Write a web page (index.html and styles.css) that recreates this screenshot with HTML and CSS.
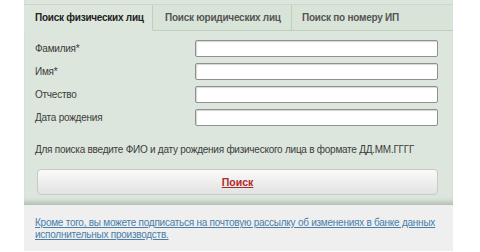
FILE: index.html
```html
<!DOCTYPE html>
<html lang="ru">
<head>
<meta charset="utf-8">
<link rel="stylesheet" href="styles.css">
</head>
<body>
<div class="wrap">
  <div class="panel">
    <div class="tabs">
      <div class="tab tab-active">Поиск физических лиц</div>
      <div class="tab tab-2">Поиск юридических лиц</div>
      <div class="tab tab-3">Поиск по номеру ИП</div>
    </div>
    <div class="form">
      <div class="row"><span class="label">Фамилия*</span><span class="input"></span></div>
      <div class="row"><span class="label">Имя*</span><span class="input"></span></div>
      <div class="row"><span class="label">Отчество</span><span class="input"></span></div>
      <div class="row"><span class="label">Дата рождения</span><span class="input"></span></div>
      <p class="hint">Для поиска введите ФИО и дату рождения физического лица в формате ДД.ММ.ГГГГ</p>
      <div class="button"><span>Поиск</span></div>
    </div>
  </div>
  <div class="footer">
    <a class="link">Кроме того, вы можете подписаться на почтовую рассылку об изменениях в банке данных исполнительных производств.</a>
  </div>
</div>
</body>
</html>
```
FILE: styles.css
```css
html, body { margin: 0; padding: 0; background: #ffffff; overflow: hidden; }
body { font-family: "Liberation Sans", Arial, sans-serif; font-size: 10px; letter-spacing: -0.25px; color: #3c3c3c; }
.wrap { margin-left: 24px; width: 429px; }
.panel {
  background: #dce6dc;
  padding-top: 4px;
  padding-bottom: 10px;
  box-shadow: inset 0 -6px 5px -3px #b0bdb0;
}
.tabs {
  display: flex;
  height: 27px;
  border-top: 1px solid #ccd7cc;
  box-sizing: border-box;
}
.tab {
  font-weight: bold;
  color: #555;
  line-height: 25px;
  padding-left: 11px;
  white-space: nowrap;
  border-bottom: 1px solid #c2cdc2;
  border-right: 1px solid #c2cdc2;
  background: #d9e4d9;
  box-sizing: border-box;
}
.tab-active { width: 129px; color: #222; border-bottom-color: transparent; background: #dce6dc; }
.tab-2 { width: 139px; padding-left: 12px; }
.tab-3 { flex: 1; border-right: none; padding-left: 10px; }
.form { padding: 6px 15px 0 11px; }
.row { display: flex; align-items: center; height: 23px; }
.label { width: 160px; }
.input {
  width: 243px;
  height: 17px;
  box-sizing: border-box;
  background: #fff;
  border: 1px solid #8e918e;
  border-radius: 2px;
  box-shadow: inset 1px 1px 1px #d5d5d5;
}
.hint { margin: 15px 0 0 0; line-height: 12px; white-space: nowrap; }
.button {
  margin: 13px 0 0 2px;
  height: 26px;
  box-sizing: border-box;
  border: 1px solid #c6cbc6;
  border-radius: 4px;
  background: linear-gradient(#fafafa, #e2e2e2);
  display: flex;
  align-items: center;
  justify-content: center;
}
.button span { color: #b02828; font-weight: bold; text-decoration: underline; font-size: 10.5px; letter-spacing: 0; }
.footer { background: #efefef; padding: 12px 11px 8px; height: 46px; box-sizing: border-box; }
.link { color: #4a7ea8; text-decoration: underline; line-height: 12px; }
```
